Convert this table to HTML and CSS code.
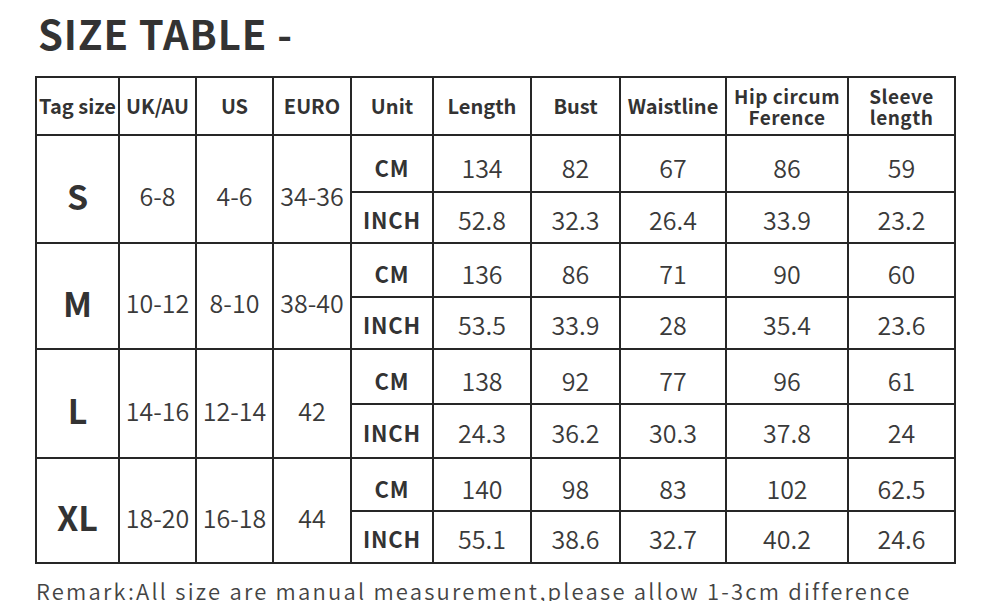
FILE: index.html
```html
<!DOCTYPE html>
<html>
<head>
<meta charset="utf-8">
<link rel="stylesheet" href="styles.css">
</head>
<body>
<div class="page">
  <h1 class="title">SIZE TABLE -</h1>
  <div class="table">
    <div class="cell head">Tag size</div>
    <div class="cell head">UK/AU</div>
    <div class="cell head">US</div>
    <div class="cell head">EURO</div>
    <div class="cell head">Unit</div>
    <div class="cell head">Length</div>
    <div class="cell head">Bust</div>
    <div class="cell head">Waistline</div>
    <div class="cell head small">Hip circum<br>Ference</div>
    <div class="cell head small">Sleeve<br>length</div>

    <div class="cell size span">S</div>
    <div class="cell merged span">6-8</div>
    <div class="cell merged span">4-6</div>
    <div class="cell merged span">34-36</div>
    <div class="cell unit cm">CM</div>
    <div class="cell val cm">134</div>
    <div class="cell val cm">82</div>
    <div class="cell val cm">67</div>
    <div class="cell val cm">86</div>
    <div class="cell val cm">59</div>
    <div class="cell unit inch">INCH</div>
    <div class="cell val inch">52.8</div>
    <div class="cell val inch">32.3</div>
    <div class="cell val inch">26.4</div>
    <div class="cell val inch">33.9</div>
    <div class="cell val inch">23.2</div>

    <div class="cell size span">M</div>
    <div class="cell merged span">10-12</div>
    <div class="cell merged span">8-10</div>
    <div class="cell merged span">38-40</div>
    <div class="cell unit cm">CM</div>
    <div class="cell val cm">136</div>
    <div class="cell val cm">86</div>
    <div class="cell val cm">71</div>
    <div class="cell val cm">90</div>
    <div class="cell val cm">60</div>
    <div class="cell unit inch">INCH</div>
    <div class="cell val inch">53.5</div>
    <div class="cell val inch">33.9</div>
    <div class="cell val inch">28</div>
    <div class="cell val inch">35.4</div>
    <div class="cell val inch">23.6</div>

    <div class="cell size span">L</div>
    <div class="cell merged span">14-16</div>
    <div class="cell merged span">12-14</div>
    <div class="cell merged span">42</div>
    <div class="cell unit cm">CM</div>
    <div class="cell val cm">138</div>
    <div class="cell val cm">92</div>
    <div class="cell val cm">77</div>
    <div class="cell val cm">96</div>
    <div class="cell val cm">61</div>
    <div class="cell unit inch">INCH</div>
    <div class="cell val inch">24.3</div>
    <div class="cell val inch">36.2</div>
    <div class="cell val inch">30.3</div>
    <div class="cell val inch">37.8</div>
    <div class="cell val inch">24</div>

    <div class="cell size span">XL</div>
    <div class="cell merged span">18-20</div>
    <div class="cell merged span">16-18</div>
    <div class="cell merged span">44</div>
    <div class="cell unit cm">CM</div>
    <div class="cell val cm">140</div>
    <div class="cell val cm">98</div>
    <div class="cell val cm">83</div>
    <div class="cell val cm">102</div>
    <div class="cell val cm">62.5</div>
    <div class="cell unit inch">INCH</div>
    <div class="cell val inch">55.1</div>
    <div class="cell val inch">38.6</div>
    <div class="cell val inch">32.7</div>
    <div class="cell val inch">40.2</div>
    <div class="cell val inch">24.6</div>
  </div>
  <p class="remark">Remark:All size are manual measurement,please allow 1-3cm difference</p>
</div>
</body>
</html>
```

FILE: styles.css
```css
html, body {
  margin: 0;
  padding: 0;
  background: #ffffff;
}

body {
  font-family: "Noto Sans CJK SC", "Noto Sans", sans-serif;
  color: #333333;
}

.page {
  padding: 13px 0 0 35px;
}

.title {
  margin: 0 0 23px 3px;
  font-size: 40px;
  line-height: 40px;
  font-weight: 700;
  letter-spacing: 0.9px;
  color: #333333;
}

.table {
  display: grid;
  width: max-content;
  grid-template-columns: 81px 75px 75px 76px 80px 96px 87px 104px 120px 105px;
  grid-template-rows: 56px 55px 49px 52px 50px 53px 52px 51px 50px;
  gap: 2px;
  padding: 2px;
  background: #262626;
}

.cell {
  background: #ffffff;
  display: flex;
  align-items: center;
  justify-content: center;
  text-align: center;
  white-space: nowrap;
}

.span {
  grid-row: span 2;
}

.head {
  font-size: 20px;
  font-weight: 700;
  line-height: 22px;
  color: #333333;
}

.head.small {
  font-size: 19px;
  line-height: 21px;
  letter-spacing: 0.5px;
}

.size {
  font-size: 34px;
  font-weight: 700;
  color: #333333;
  padding-top: 12px;
}

.merged {
  font-size: 25px;
  font-weight: 350;
  color: #3a3a3a;
  padding-top: 12px;
}

.unit {
  font-size: 22px;
  font-weight: 700;
  letter-spacing: 0.8px;
  color: #333333;
}

.val {
  font-size: 25px;
  font-weight: 350;
  color: #3a3a3a;
}

.cm {
  padding-top: 6px;
}

.inch {
  padding-top: 2px;
}

.remark {
  margin: 15px 0 0 1px;
  font-size: 22px;
  line-height: 22px;
  letter-spacing: 2.2px;
  font-weight: 350;
  color: #444444;
}
```
